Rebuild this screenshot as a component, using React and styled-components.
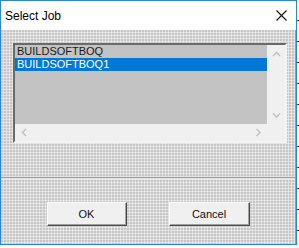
import React from "react";
import styled, { createGlobalStyle } from "styled-components";

const GlobalStyle = createGlobalStyle`
  html, body {
    margin: 0;
    padding: 0;
    width: 299px;
    height: 248px;
    overflow: hidden;
  }
  body {
    background-color: #ffffff;
    background-image: repeating-linear-gradient(
      to bottom,
      transparent 0,
      transparent 20px,
      #3a3a3a 20px,
      #3a3a3a 21px
    );
    font-family: "Liberation Sans", Arial, sans-serif;
  }
`;

const Window = styled.div`
  width: 297px;
  height: 245px;
  box-sizing: border-box;
  border: 1px solid #2b86d6;
  background: #ffffff;
  display: flex;
  flex-direction: column;
`;

const TitleBar = styled.div`
  height: 29px;
  display: flex;
  align-items: center;
  justify-content: space-between;
  padding: 0 9px 0 4px;
  background: #ffffff;
  font-size: 12px;
  color: #000;
`;

const Client = styled.div`
  flex: 1;
  display: flex;
  flex-direction: column;
  background-color: #c6c6c6;
  background-image: repeating-linear-gradient(
      to right,
      transparent 0,
      transparent 2px,
      rgba(255, 255, 255, 0.45) 2px,
      rgba(255, 255, 255, 0.45) 3px
    ),
    repeating-linear-gradient(
      to bottom,
      transparent 0,
      transparent 2px,
      rgba(255, 255, 255, 0.45) 2px,
      rgba(255, 255, 255, 0.45) 3px
    );
  border-right: 1px solid #9a9a9a;
`;

const Upper = styled.div`
  height: 147px;
  box-sizing: border-box;
  padding: 13px 0 0 12px;
`;

const ListBox = styled.div`
  width: 274px;
  height: 100px;
  box-sizing: border-box;
  border-style: solid;
  border-width: 2px;
  border-color: #6a6a6a #f4f4f4 #f4f4f4 #6a6a6a;
  display: grid;
  grid-template-columns: 252px 18px;
  grid-template-rows: 79px 17px;
  background: #f0f0f0;
`;

const Items = styled.div`
  background: #c3c3c3;
  display: flex;
  flex-direction: column;
  padding-top: 0;
`;

const Item = styled.div`
  height: 13px;
  line-height: 13px;
  padding-left: 2px;
  font-size: 11px;
  color: ${(p) => (p.$selected ? "#ffffff" : "#1a1a1a")};
  background: ${(p) => (p.$selected ? "#0078d7" : "transparent")};
`;

const ScrollBar = styled.div`
  background: #f0f0f0;
  display: flex;
  flex-direction: ${(p) => (p.$horizontal ? "row" : "column")};
  justify-content: space-between;
  align-items: center;
  padding: ${(p) => (p.$horizontal ? "0 5px 0 6px" : "6px 0 5px")};
`;

const Corner = styled.div`
  background: #f0f0f0;
`;

const Separator = styled.div`
  height: 1px;
  background: #9c9c9c;
  border-bottom: 1px solid #e4e4e4;
`;

const ButtonRow = styled.div`
  display: flex;
  justify-content: center;
  gap: 42px;
  padding-top: 23px;
`;

const Button = styled.button`
  width: ${(p) => p.$width}px;
  height: 24px;
  box-sizing: border-box;
  border-style: solid;
  border-width: 1px;
  border-color: #ffffff #4a4a4a #4a4a4a #ffffff;
  box-shadow: inset -1px -1px 0 #a0a0a0;
  background: #f0f0f0;
  font-family: "Liberation Sans", Arial, sans-serif;
  font-size: 11px;
  color: #111;
  padding: 0;
`;

const Chevron = ({ dir }) => {
  const paths = {
    up: "M1 5 L4.5 1.5 L8 5",
    down: "M1 1.5 L4.5 5 L8 1.5",
    left: "M5 1 L1.5 4.5 L5 8",
    right: "M1.5 1 L5 4.5 L1.5 8",
  };
  const vertical = dir === "up" || dir === "down";
  return (
    <svg
      width={vertical ? 9 : 7}
      height={vertical ? 7 : 9}
      viewBox={vertical ? "0 0 9 7" : "0 0 7 9"}
    >
      <path d={paths[dir]} fill="none" stroke="#c4c4c4" strokeWidth="1.6" />
    </svg>
  );
};

const CloseIcon = () => (
  <svg width="11" height="11" viewBox="0 0 11 11">
    <path d="M0.5 0.5 L10.5 10.5 M10.5 0.5 L0.5 10.5" stroke="#111" strokeWidth="1.1" />
  </svg>
);

const jobs = ["BUILDSOFTBOQ", "BUILDSOFTBOQ1"];

export default function App() {
  return (
    <>
      <GlobalStyle />
      <Window>
        <TitleBar>
          <span>Select Job</span>
          <CloseIcon />
        </TitleBar>
        <Client>
          <Upper>
            <ListBox>
              <Items>
                {jobs.map((job, i) => (
                  <Item key={job} $selected={i === 1}>
                    {job}
                  </Item>
                ))}
              </Items>
              <ScrollBar>
                <Chevron dir="up" />
                <Chevron dir="down" />
              </ScrollBar>
              <ScrollBar $horizontal>
                <Chevron dir="left" />
                <Chevron dir="right" />
              </ScrollBar>
              <Corner />
            </ListBox>
          </Upper>
          <Separator />
          <ButtonRow>
            <Button $width={80}>OK</Button>
            <Button $width={81}>Cancel</Button>
          </ButtonRow>
        </Client>
      </Window>
    </>
  );
}
